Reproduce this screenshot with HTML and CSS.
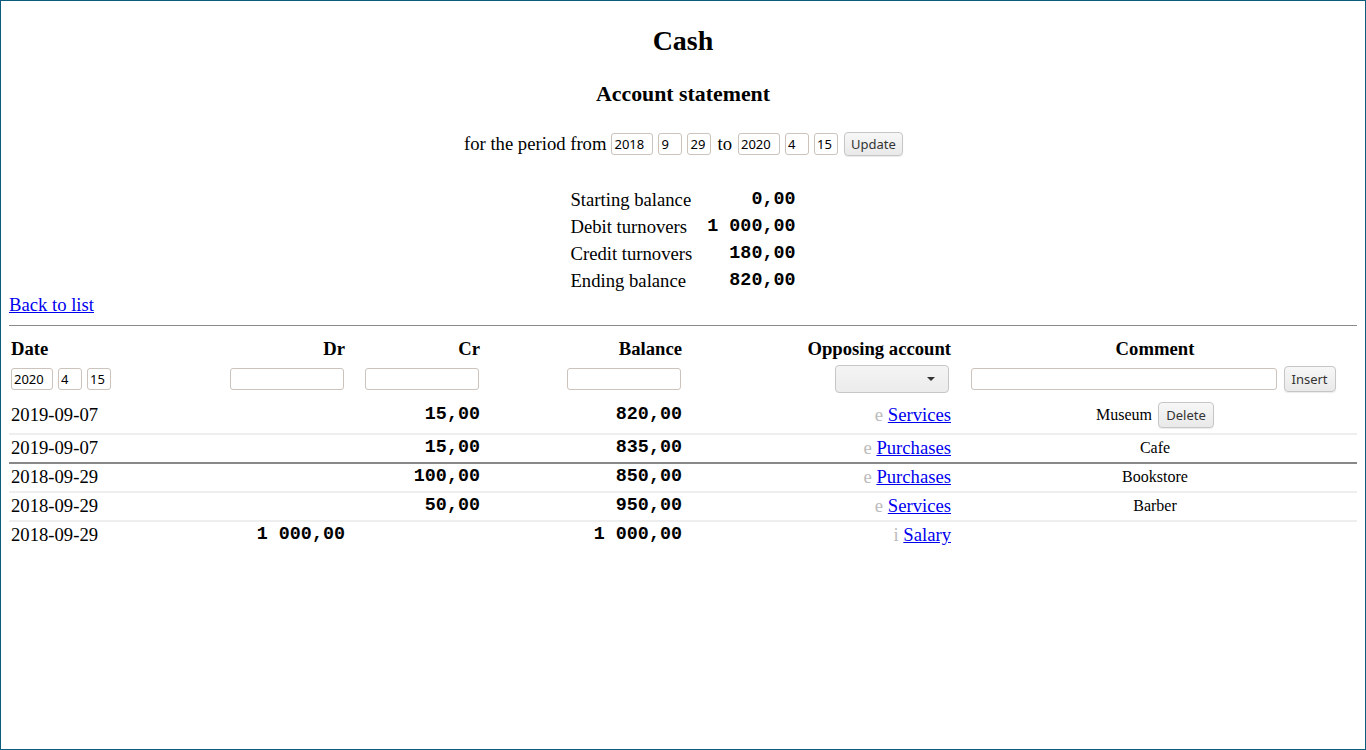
FILE: index.html
```html
<!DOCTYPE html>
<html lang="en">
<head>
<meta charset="utf-8">
<title>Cash - Account statement</title>
<link rel="stylesheet" href="styles.css">
</head>
<body>
<h1 class="title">Cash</h1>
<h2 class="subtitle">Account statement</h2>
<form class="period">
  <span class="txt">for the period from</span>
  <input class="field y" value="2018">
  <input class="field d" value="9">
  <input class="field d" value="29">
  <span class="txt">to</span>
  <input class="field y" value="2020">
  <input class="field d" value="4">
  <input class="field d" value="15">
  <button type="button" class="btn update">Update</button>
</form>

<div class="totals">
  <span>Starting balance</span><span class="amt">0,00</span>
  <span>Debit turnovers</span><span class="amt">1 000,00</span>
  <span>Credit turnovers</span><span class="amt">180,00</span>
  <span>Ending balance</span><span class="amt">820,00</span>
</div>

<div class="backline"><a href="#">Back to list</a></div>
<hr class="rule">

<div class="ledger">
  <div class="row head">
    <div class="c-date">Date</div>
    <div class="c-num">Dr</div>
    <div class="c-num">Cr</div>
    <div class="c-num">Balance</div>
    <div class="c-acc">Opposing account</div>
    <div class="c-com">Comment</div>
  </div>
  <div class="row filter">
    <div class="c-date dates">
      <input class="field y" value="2020">
      <input class="field d" value="4">
      <input class="field d" value="15">
    </div>
    <div class="c-num"><input class="field w"></div>
    <div class="c-num"><input class="field w"></div>
    <div class="c-num"><input class="field w"></div>
    <div class="c-acc"><span class="select"><svg width="10" height="6" viewBox="0 0 10 6"><path d="M1 1h8L5 5z" fill="#333"/></svg></span></div>
    <div class="c-com comfilter"><input class="field wide"><button type="button" class="btn insert">Insert</button></div>
  </div>
  <div class="row data first">
    <div class="c-date">2019-09-07</div>
    <div class="c-num amt"></div>
    <div class="c-num amt">15,00</div>
    <div class="c-num amt">820,00</div>
    <div class="c-acc"><span class="kind">e</span> <a href="#">Services</a></div>
    <div class="c-com small">Museum <button type="button" class="btn del">Delete</button></div>
  </div>
  <div class="row data sep">
    <div class="c-date">2019-09-07</div>
    <div class="c-num amt"></div>
    <div class="c-num amt">15,00</div>
    <div class="c-num amt">835,00</div>
    <div class="c-acc"><span class="kind">e</span> <a href="#">Purchases</a></div>
    <div class="c-com small">Cafe</div>
  </div>
  <div class="row data year">
    <div class="c-date">2018-09-29</div>
    <div class="c-num amt"></div>
    <div class="c-num amt">100,00</div>
    <div class="c-num amt">850,00</div>
    <div class="c-acc"><span class="kind">e</span> <a href="#">Purchases</a></div>
    <div class="c-com small">Bookstore</div>
  </div>
  <div class="row data sep">
    <div class="c-date">2018-09-29</div>
    <div class="c-num amt"></div>
    <div class="c-num amt">50,00</div>
    <div class="c-num amt">950,00</div>
    <div class="c-acc"><span class="kind">e</span> <a href="#">Services</a></div>
    <div class="c-com small">Barber</div>
  </div>
  <div class="row data sep">
    <div class="c-date">2018-09-29</div>
    <div class="c-num amt">1 000,00</div>
    <div class="c-num amt"></div>
    <div class="c-num amt">1 000,00</div>
    <div class="c-acc"><span class="kind">i</span> <a href="#">Salary</a></div>
    <div class="c-com small"></div>
  </div>
</div>
</body>
</html>
```
FILE: styles.css
```css
html {
  border: 1px solid #0b5d7b;
  height: 100%;
  box-sizing: border-box;
  background: #fff;
}

body {
  margin: 0 8px;
  font-family: "Liberation Serif", "Times New Roman", serif;
  font-size: 18.67px;
  line-height: 1.15;
  color: #000;
}

a {
  color: #0000ee;
  text-decoration: underline;
}

.title {
  margin: 24px 0 0;
  font-size: 28px;
  line-height: 32px;
  text-align: center;
  font-weight: bold;
}

.subtitle {
  margin: 25px 0 0;
  font-size: 21.84px;
  line-height: 25px;
  text-align: center;
  font-weight: bold;
}

.period {
  margin: 25px 0 0;
  display: flex;
  justify-content: center;
  align-items: center;
  gap: 5px;
  height: 24px;
}

.period .txt {
  margin: 0 1px;
}

.period .txt:first-child {
  margin-right: 0;
}

.field {
  box-sizing: border-box;
  height: 22px;
  border: 1px solid #cbc3bc;
  border-radius: 3px;
  padding: 0 2px;
  margin: 0;
  font-family: "Noto Sans", "Open Sans", sans-serif;
  font-size: 13px;
  color: #000;
  background: #fff;
}

.field.y { width: 42px; }
.field.d { width: 24px; }
.field.w { width: 114px; margin-right: 1px; }
.field.wide { width: 306px; }

.btn {
  box-sizing: border-box;
  margin: 0;
  padding: 0 6px;
  border: 1px solid #c6c6c6;
  border-radius: 4px;
  background: linear-gradient(#f7f7f7, #e9e9e9);
  font-family: "Noto Sans", "Open Sans", sans-serif;
  font-size: 13px;
  color: #333;
  box-shadow: 0 1px 1px rgba(0, 0, 0, 0.08);
}

.btn.update {
  width: 59px;
  height: 24px;
  margin-left: 1px;
}

.btn.insert {
  width: 52px;
  height: 26px;
}

.btn.del {
  width: 56px;
  height: 26px;
  margin-left: 2px;
}

.totals {
  margin-top: 30px;
  display: grid;
  grid-template-columns: auto auto;
  column-gap: 15px;
  grid-auto-rows: 27px;
  align-items: center;
  justify-content: center;
}

.amt {
  font-family: "Liberation Mono", "Courier New", monospace;
  font-weight: bold;
  font-size: 18.4px;
  text-align: right;
}

.backline {
  line-height: 21.5px;
}

.rule {
  margin: 9px 0 0;
  border: 0;
  border-top: 1px solid #8a8a8a;
  height: 0;
}

.row {
  display: grid;
  grid-template-columns: 203px 135px 135px 202px 269px 404px;
  align-items: center;
}

.row > div {
  padding: 0 2px;
  min-width: 0;
  white-space: nowrap;
}

.c-date { text-align: left; }
.c-num { text-align: right; }
.c-acc { text-align: right; }
.c-com { text-align: center; }

.head {
  height: 36px;
  align-items: end;
  font-weight: bold;
}

.head > div {
  padding-bottom: 2px;
}

.filter {
  height: 34px;
}

.filter > div {
  display: flex;
  align-items: center;
}

.filter .c-num,
.filter .c-acc {
  justify-content: flex-end;
}

.dates {
  gap: 5px;
}

.row > .comfilter {
  justify-content: center;
  gap: 7px;
  padding-right: 6px;
}

.select {
  box-sizing: border-box;
  width: 114px;
  height: 28px;
  margin-right: 2px;
  border: 1px solid #c6c6c6;
  border-radius: 4px;
  background: linear-gradient(#f4f4f4, #ececec);
  display: flex;
  align-items: center;
  justify-content: flex-end;
  padding-right: 12px;
}

.data {
  height: 27px;
}

.data.first {
  box-sizing: border-box;
  height: 37px;
  padding-top: 2px;
}

.data.sep {
  border-top: 2px solid #eeeeee;
}

.data.year {
  border-top: 2px solid #888888;
}

.small {
  font-size: 16px;
}

.kind {
  color: #bbbbbb;
}
```
